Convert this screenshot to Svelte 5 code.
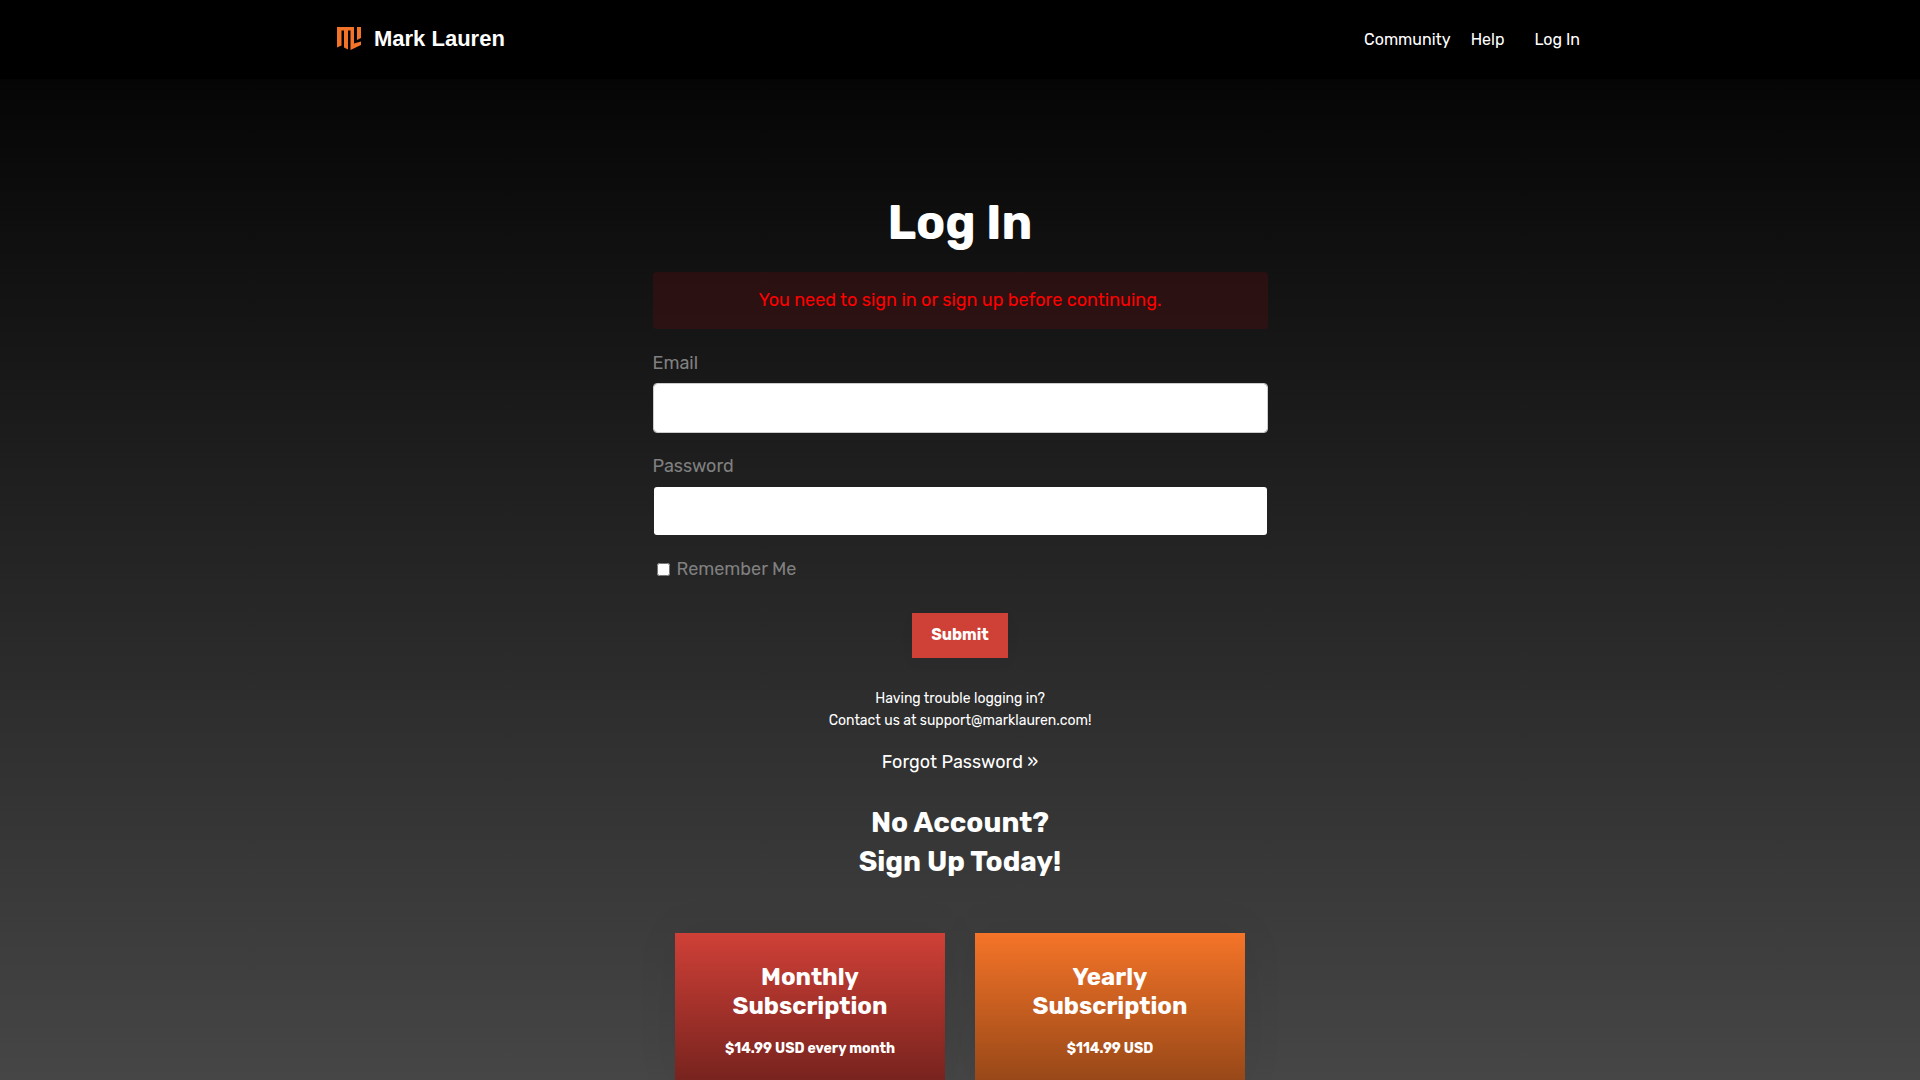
<script>
  let email = $state('');
  let password = $state('');
  let remember = $state(false);

  const plans = [
    { name: 'Monthly', price: '$14.99 USD every month', tone: 'red' },
    { name: 'Yearly', price: '$114.99 USD', tone: 'orange' }
  ];
</script>

<div class="page">
  <header>
    <div class="bar">
      <a class="brand" href="#home">
        <svg viewBox="0 0 24 23" width="24" height="23" aria-hidden="true">
          <path fill="#f37428" d="M0 0H17V16.5L24 14.5V18L13.5 23V3.5H11V22.5L7 20.5V3.5H4.5V18.5L0 20.5ZM20 0H24V11L20 13Z" />
        </svg>
        <span>Mark Lauren</span>
      </a>
      <nav>
        <a href="#community">Community</a>
        <a href="#help">Help</a>
        <a class="login" href="#login">Log In</a>
      </nav>
    </div>
  </header>

  <main>
    <h1>Log In</h1>
    <p class="alert" role="alert">You need to sign in or sign up before continuing.</p>
    <form onsubmit={(e) => e.preventDefault()}>
      <label for="email">Email</label>
      <input id="email" class="field edged" type="email" bind:value={email} />
      <label for="password">Password</label>
      <input id="password" class="field" type="password" bind:value={password} />
      <label class="remember"><input type="checkbox" bind:checked={remember} />Remember Me</label>
      <button type="submit">Submit</button>
    </form>
    <p class="help">Having trouble logging in?<br />Contact us at support@marklauren.com!</p>
    <a class="forgot" href="#forgot">Forgot Password »</a>
    <h2>No Account?<br />Sign Up Today!</h2>
    <div class="plans">
      {#each plans as plan}
        <a class="plan {plan.tone}" href="#{plan.name}">
          <h3>{plan.name}<br />Subscription</h3>
          <p>{plan.price}</p>
        </a>
      {/each}
    </div>
  </main>
</div>

<style>
  :global(body) { margin: 0; background: #444; }
  * { box-sizing: border-box; }
  .page {
    min-height: 100vh;
    display: flex;
    flex-direction: column;
    background: linear-gradient(#000, #464646);
    color: #fff;
    font-family: Rubik, Roboto, sans-serif;
    font-size: 18px;
    line-height: 29px;
  }
  a { color: inherit; text-decoration: none; }
  h1, h2, h3, p { margin: 0; }
  header { background: #000; }
  .bar {
    max-width: 1246px;
    margin: 0 auto;
    padding: 25px 3px 25px 0;
    display: flex;
    align-items: center;
    justify-content: space-between;
  }
  .brand {
    display: flex;
    align-items: center;
    gap: 13px;
    padding-bottom: 2px;
    font: bold 22px/24px "Liberation Sans", Arial, sans-serif;
  }
  .brand svg { display: block; }
  nav { display: flex; gap: 20px; font-size: 16px; }
  .login { margin-left: 10px; }
  main {
    flex: 1;
    width: 100%;
    max-width: 615px;
    margin: 0 auto;
    padding-top: 115px;
    display: flex;
    flex-direction: column;
    align-items: center;
    text-align: center;
  }
  h1 { font-size: 48px; line-height: 58px; margin-bottom: 20px; }
  .alert {
    width: 100%;
    padding: 14px;
    border-radius: 4px;
    background: rgba(255, 0, 0, 0.1);
    color: #f00;
  }
  form {
    width: 100%;
    display: flex;
    flex-direction: column;
    text-align: left;
    color: #808080;
    padding-top: 20px;
  }
  .field {
    height: 50px;
    margin: 5px 0 19px;
    padding: 12px;
    border: 1px solid transparent;
    border-radius: 4px;
    background: #fff;
    background-clip: padding-box;
    font: inherit;
  }
  .edged { border-color: #ccc; }
  .remember { display: flex; align-items: center; }
  .remember input { width: 13px; height: 13px; margin: 0 7px 0 4px; }
  button {
    align-self: center;
    width: 96px;
    height: 45px;
    margin-top: 29px;
    padding: 0 0 2px;
    border: 0;
    background: #cf4037;
    box-shadow: 0 4px 16px rgba(0, 0, 0, 0.03);
    color: #fff;
    font: bold 16px/24px Rubik, Roboto, sans-serif;
  }
  .help { margin-top: 30px; font-size: 14px; line-height: 22px; }
  .forgot { margin-top: 16px; }
  h2 { margin-top: 26px; font-size: 28px; line-height: 39px; }
  .plans {
    flex: 1;
    align-self: stretch;
    display: grid;
    grid-template-columns: repeat(2, minmax(0, 270px));
    justify-content: center;
    gap: 30px;
    padding-top: 52px;
  }
  .plan { padding: 30px 15px 10px; box-shadow: 0 0 40px rgba(0, 0, 0, 0.07); }
  .plan h3 { font-size: 24px; line-height: 29px; }
  .plan p { margin-top: 17px; font-size: 14px; line-height: 22px; font-weight: bold; }
  .red { background: linear-gradient(#cf4037, #78231e); }
  .orange { background: linear-gradient(#f57428, #984818); }
</style>
